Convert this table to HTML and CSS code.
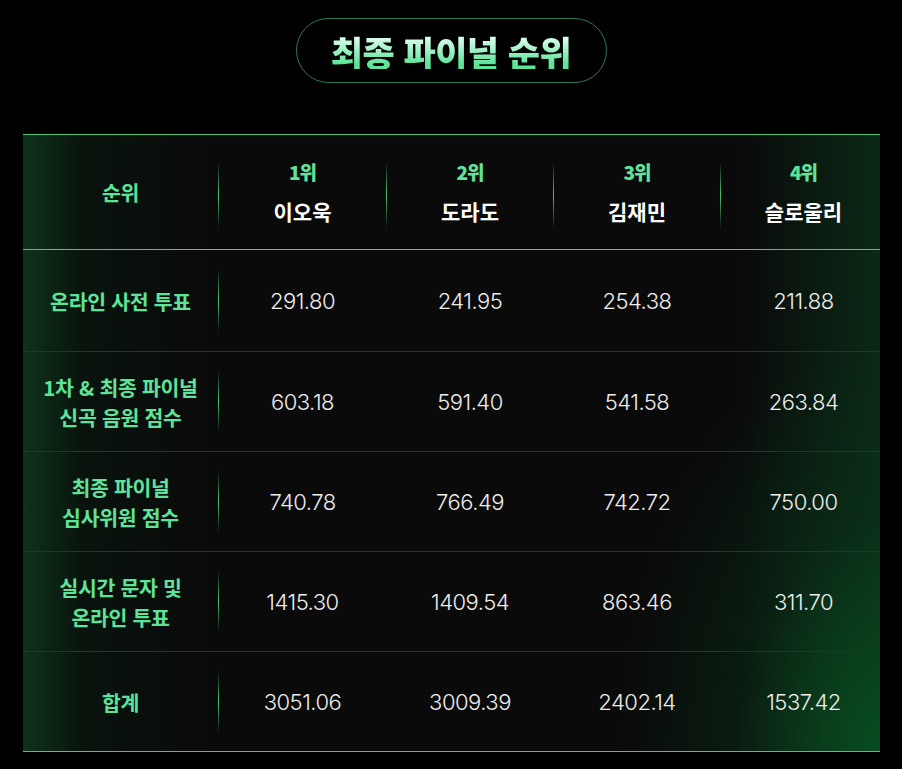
FILE: index.html
```html
<!DOCTYPE html>
<html lang="ko">
<head>
<meta charset="utf-8">
<link rel="stylesheet" href="styles.css">
</head>
<body>
<main class="page">
  <div class="title-wrap"><h1 class="title">최종 파이널 순위</h1></div>
  <div class="table">
    <div class="row head">
      <div class="cell label div">순위</div>
      <div class="cell div"><span class="rank">1위</span><span class="name">이오욱</span></div>
      <div class="cell div"><span class="rank">2위</span><span class="name">도라도</span></div>
      <div class="cell div"><span class="rank">3위</span><span class="name">김재민</span></div>
      <div class="cell last"><span class="rank">4위</span><span class="name">슬로울리</span></div>
    </div>
    <div class="row r1">
      <div class="cell label div">온라인 사전 투표</div>
      <div class="cell num">291.80</div>
      <div class="cell num">241.95</div>
      <div class="cell num">254.38</div>
      <div class="cell num last">211.88</div>
    </div>
    <div class="row r2">
      <div class="cell label div">1차 &amp; 최종 파이널<br>신곡 음원 점수</div>
      <div class="cell num">603.18</div>
      <div class="cell num">591.40</div>
      <div class="cell num">541.58</div>
      <div class="cell num last">263.84</div>
    </div>
    <div class="row r3">
      <div class="cell label div">최종 파이널<br>심사위원 점수</div>
      <div class="cell num">740.78</div>
      <div class="cell num">766.49</div>
      <div class="cell num">742.72</div>
      <div class="cell num last">750.00</div>
    </div>
    <div class="row r4">
      <div class="cell label div">실시간 문자 및<br>온라인 투표</div>
      <div class="cell num">1415.30</div>
      <div class="cell num">1409.54</div>
      <div class="cell num">863.46</div>
      <div class="cell num last">311.70</div>
    </div>
    <div class="row r5 total">
      <div class="cell label div">합계</div>
      <div class="cell num">3051.06</div>
      <div class="cell num">3009.39</div>
      <div class="cell num">2402.14</div>
      <div class="cell num last">1537.42</div>
    </div>
  </div>
</main>
</body>
</html>
```
FILE: styles.css
```css
* { box-sizing: border-box; }
html, body {
  margin: 0;
  padding: 0;
  background: #000;
}
body {
  font-family: "Noto Sans CJK KR", "Noto Sans", sans-serif;
  color: #fff;
  width: 902px;
  height: 769px;
  overflow: hidden;
}
.page {
  display: flex;
  flex-direction: column;
  align-items: center;
  padding-top: 18px;
}
.title-wrap {
  width: 311px;
  height: 65px;
  border: 1px solid #2f7a52;
  border-radius: 33px;
  display: flex;
  align-items: center;
  justify-content: center;
}
.title {
  margin: 0;
  font-size: 35px;
  font-weight: 900;
  line-height: 1;
  letter-spacing: -0.5px;
  background: linear-gradient(to bottom, #e0fff0 10%, #5fe39a 85%);
  -webkit-background-clip: text;
  background-clip: text;
  color: transparent;
  padding-top: 1px;
}
.table {
  margin-top: 51px;
  width: 857px;
  border-top: 1px solid #4fc47f;
  border-bottom: 1px solid #4fc47f;
  background:
    radial-gradient(ellipse 260px 420px at 100% 100%, rgba(8, 78, 32, 0.95), rgba(8, 60, 28, 0.35) 55%, rgba(0, 0, 0, 0) 100%),
    linear-gradient(to left, rgba(12, 70, 34, 0.5) 0, rgba(0, 0, 0, 0) 140px),
    linear-gradient(to right, rgba(14, 72, 34, 0.65) 0, rgba(8, 40, 20, 0.3) 60px, rgba(0, 0, 0, 0) 190px),
    #0a0a0a;
}
.row {
  display: grid;
  grid-template-columns: 196px 168px 167px 167px 159px;
  border-bottom: 1px solid #143e29;
}
.row.head { height: 115px; border-bottom: 1px solid #4fc47f; }
.row.r1 { height: 102px; }
.row.r2, .row.r3, .row.r4 { height: 100px; }
.row.r5 { height: 99px; border-bottom: none; }
.cell {
  position: relative;
  display: flex;
  flex-direction: column;
  align-items: center;
  justify-content: center;
  text-align: center;
}
.cell.last { padding-left: 7px; }
.cell.div::after {
  content: "";
  position: absolute;
  right: 0;
  top: 18px;
  bottom: 18px;
  width: 1px;
  background: linear-gradient(to bottom, rgba(80, 220, 130, 0) 0, rgba(80, 220, 130, 0.9) 50%, rgba(80, 220, 130, 0) 100%);
}
.head .cell.div::after { top: 26px; bottom: 20px; }
.label {
  color: #5ee39a;
  font-size: 20.5px;
  font-weight: 700;
  line-height: 30px;
  letter-spacing: -0.3px;
}
.rank {
  color: #5ee39a;
  font-size: 19px;
  font-weight: 900;
  line-height: 22px;
  letter-spacing: -1px;
}
.name {
  color: #fff;
  font-size: 21px;
  font-weight: 700;
  line-height: 26px;
  margin-top: 15px;
}
.num {
  color: #ededed;
  font-family: Inter, "Noto Sans", sans-serif;
  font-size: 22px;
  font-weight: 300;
  letter-spacing: -0.5px;
}
```
